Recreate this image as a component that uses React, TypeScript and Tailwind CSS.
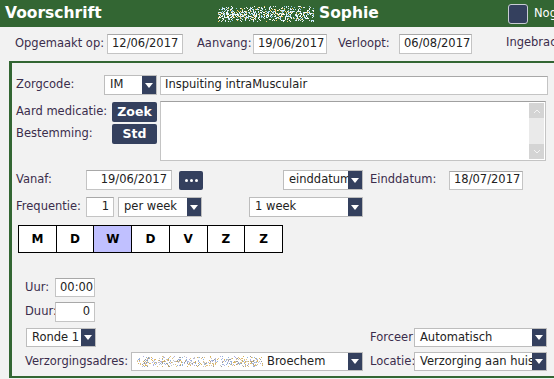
import { useMemo } from "react";

const font = { fontFamily: '"DejaVu Sans", Verdana, sans-serif' };

// pixel noise standing in for the scrambled (anonymised) name
const Noise = ({ w, h, seed, colors, density = 0.45 }: { w: number; h: number; seed: number; colors: string[]; density?: number }) => {
    const dots = useMemo(() => {
        let s = seed;
        const rnd = () => {
            s = (s * 1103515245 + 12345) % 2147483648;
            return s / 2147483648;
        };
        const out: { x: number; y: number; c: string }[] = [];
        for (let i = 0; i < w * h * density; i++) {
            const x = Math.floor(rnd() * w);
            const y = Math.floor(rnd() * h);
            const band = Math.abs(y - h / 2) / (h / 2);
            if (rnd() > band * 0.8) out.push({ x, y, c: colors[Math.floor(rnd() * colors.length)] });
        }
        return out;
    }, [w, h, seed, colors, density]);
    return (
        <svg width={w} height={h} className="block shrink-0">
            {dots.map((d, i) => (
                <rect key={i} x={d.x} y={d.y} width={1} height={1} fill={d.c} />
            ))}
        </svg>
    );
};

const Arrow = () => (
    <div className="w-[14px] h-full bg-[#34405e] flex items-center justify-center shrink-0">
        <svg width="8" height="5" viewBox="0 0 8 5">
            <path d="M0 0 H8 L4 5 Z" fill="#fff" />
        </svg>
    </div>
);

const Sel = ({ w, text, h = "h-[20px]" }: { w: string; text: React.ReactNode; h?: string }) => (
    <div className={`${w} ${h} flex border border-[#bdbdbd] bg-white shrink-0`}>
        <div className="flex-1 flex items-center pl-[5px] text-[#222] whitespace-nowrap overflow-hidden">{text}</div>
        <Arrow />
    </div>
);

const Input = ({ w, value, right, h = "h-[20px]" }: { w: string; value: string; right?: boolean; h?: string }) => (
    <div
        className={`${w} ${h} flex items-center border border-[#c4c4c4] border-t-[#a8a8a8] bg-white text-[#222] px-[4px] shrink-0 whitespace-nowrap overflow-hidden ${right ? "justify-end" : ""}`}
    >
        {value}
    </div>
);

const NavyBtn = ({ label }: { label: string }) => (
    <div className="w-[45px] h-[20px] rounded-[2px] bg-[#34405e] text-white font-bold text-[12.5px] flex items-center justify-center">
        {label}
    </div>
);

const days = ["M", "D", "W", "D", "V", "Z", "Z"];

export default function App() {
    return (
        <div className="w-[554px] h-[379px] overflow-hidden bg-[#f2f2f2] text-[11.5px] text-[#3b2d4c] whitespace-nowrap" style={font}>
            {/* header */}
            <div className="h-[27px] bg-[#336633] flex items-center text-white">
                <div className="ml-[5px] w-[213px] shrink-0 font-bold text-[15.5px]">Voorschrift</div>
                <Noise w={96} h={16} seed={7} density={0.8} colors={["#ffffff", "#d8f0ff", "#bfe6ff", "#ffcc66", "#eeeeee", "#99ccee", "#ffffff"]} />
                <div className="ml-[5px] w-[189px] shrink-0 font-bold text-[15.5px]">Sophie</div>
                <div className="w-[20px] h-[20px] rounded-[3px] bg-[#34405e] border border-[#c8ccd4] shrink-0" />
                <div className="ml-[6px] text-[11.5px]">Nog</div>
            </div>

            {/* dates row */}
            <div className="mt-[7px] h-[20px] flex items-center pl-[15px]">
                <div className="w-[92px] shrink-0">Opgemaakt op:</div>
                <Input w="w-[76px]" value="12/06/2017" />
                <div className="ml-[14px] w-[56px] shrink-0">Aanvang:</div>
                <Input w="w-[74px]" value="19/06/2017" />
                <div className="ml-[11px] w-[61px] shrink-0">Verloopt:</div>
                <Input w="w-[73px]" value="06/08/2017" />
                <div className="ml-[34px] -mt-[3px]">Ingebracht</div>
            </div>

            {/* panel */}
            <div className="mt-[7px] ml-[9px] w-[600px] border-t-2 border-l-[3px] border-b-2 border-[#336633] pt-[12px] pb-[5px]">
                <div className="flex items-center h-[20px] pl-[4px]">
                    <div className="w-[88px] shrink-0">Zorgcode:</div>
                    <Sel w="w-[53px]" text="IM" />
                    <div className="ml-[3px]">
                        <Input w="w-[388px]" h="h-[19px]" value="Inspuiting intraMusculair" />
                    </div>
                </div>

                <div className="mt-[6px] flex pl-[4px]">
                    <div className="w-[144px] shrink-0">
                        <div className="mt-[1px] flex items-center">
                            <div className="w-[96px] shrink-0">Aard medicatie:</div>
                            <NavyBtn label="Zoek" />
                        </div>
                        <div className="mt-[2px] flex items-center">
                            <div className="w-[96px] shrink-0">Bestemming:</div>
                            <NavyBtn label="Std" />
                        </div>
                    </div>
                    <div className="w-[386px] h-[60px] bg-white border border-[#c4c4c4] border-t-[#a0a0a0] flex justify-end p-[1px]">
                        <div className="w-[15px] h-full bg-[#eaeaea] flex flex-col justify-between">
                            <div className="h-[15px] bg-[#d4d4d4] flex items-center justify-center">
                                <svg width="6" height="4" viewBox="0 0 6 4">
                                    <path d="M0 4 L3 1 L6 4" stroke="#f4f4f4" fill="none" />
                                </svg>
                            </div>
                            <div className="h-[15px] bg-[#d4d4d4] flex items-center justify-center">
                                <svg width="6" height="4" viewBox="0 0 6 4">
                                    <path d="M0 0 L3 3 L6 0" stroke="#f4f4f4" fill="none" />
                                </svg>
                            </div>
                        </div>
                    </div>
                </div>

                <div className="mt-[9px] flex items-center h-[20px] pl-[4px]">
                    <div className="w-[70px] shrink-0">Vanaf:</div>
                    <Input w="w-[86px]" value="19/06/2017" right />
                    <div className="ml-[7px] w-[24px] h-[19px] rounded-[2px] bg-[#34405e] flex items-center justify-center gap-[2px] shrink-0">
                        <span className="w-[3px] h-[3px] bg-white rounded-full" />
                        <span className="w-[3px] h-[3px] bg-white rounded-full" />
                        <span className="w-[3px] h-[3px] bg-white rounded-full" />
                    </div>
                    <div className="ml-[80px]">
                        <Sel w="w-[80px]" text="einddatum" />
                    </div>
                    <div className="ml-[7px] w-[79px] shrink-0">Einddatum:</div>
                    <Input w="w-[74px]" h="h-[19px]" value="18/07/2017" />
                </div>

                <div className="mt-[7px] flex items-center h-[20px] pl-[4px]">
                    <div className="w-[70px] shrink-0">Frequentie:</div>
                    <Input w="w-[28px]" value="1" right />
                    <div className="ml-[4px]">
                        <Sel w="w-[84px]" text="per week" />
                    </div>
                    <div className="ml-[47px]">
                        <Sel w="w-[114px]" text="1 week" />
                    </div>
                </div>

                <div className="mt-[8px] ml-[6px] w-[265px] h-[28px] flex border border-black bg-white text-black font-bold text-[12px]">
                    {days.map((d, i) => (
                        <div
                            key={i}
                            className={`flex-1 flex items-center justify-center border-r border-black last:border-r-0 ${i === 2 ? "bg-[#c0c0ff]" : ""}`}
                        >
                            {d}
                        </div>
                    ))}
                </div>

                <div className="mt-[25px] ml-[13px] flex items-center h-[19px]">
                    <div className="w-[30px] shrink-0">Uur:</div>
                    <Input w="w-[40px]" h="h-[19px]" value="00:00" />
                </div>
                <div className="mt-[5px] ml-[13px] flex items-center h-[20px]">
                    <div className="w-[30px] shrink-0">Duur:</div>
                    <Input w="w-[40px]" value="0" right />
                </div>

                <div className="mt-[6px] ml-[14px] flex items-center h-[19px]">
                    <Sel w="w-[70px]" h="h-[19px]" text="Ronde 1" />
                    <div className="ml-[274px] w-[44px] shrink-0">Forceer</div>
                    <Sel w="w-[133px]" h="h-[19px]" text="Automatisch" />
                </div>

                <div className="mt-[5px] ml-[13px] flex items-center h-[19px]">
                    <div className="w-[106px] shrink-0">Verzorgingsadres:</div>
                    <Sel
                        w="w-[232px]"
                        h="h-[19px]"
                        text={
                            <>
                                <Noise w={126} h={11} seed={42} density={0.6} colors={["#8fb3d9", "#c6c6c6", "#d9b35a", "#b0b0e0", "#9a9a9a", "#e0c080"]} />
                                <span className="ml-[4px]">Broechem</span>
                            </>
                        }
                    />
                    <div className="ml-[7px] w-[44px] shrink-0">Locatie:</div>
                    <Sel w="w-[133px]" h="h-[19px]" text="Verzorging aan huis" />
                </div>
            </div>
        </div>
    );
}
